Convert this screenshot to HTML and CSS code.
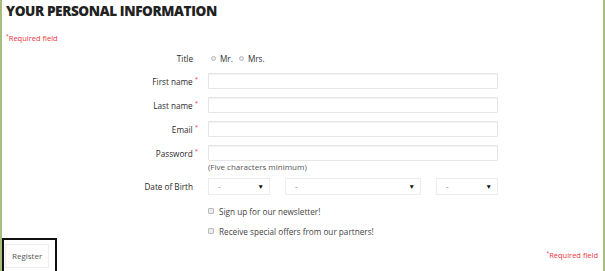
FILE: index.html
```html
<!DOCTYPE html>
<html lang="en">
<head>
<meta charset="UTF-8">
<title>Your personal information</title>
<link rel="stylesheet" href="styles.css">
</head>
<body>
<div class="frame">
  <h1>YOUR PERSONAL INFORMATION</h1>
  <p class="req"><sup>*</sup>Required field</p>

  <form class="account">
    <div class="row title-row">
      <label>Title</label>
      <div class="radios">
        <span class="radio"><i></i>Mr.</span>
        <span class="radio"><i></i>Mrs.</span>
      </div>
    </div>
    <div class="row">
      <label>First name<sup>*</sup></label>
      <input type="text">
    </div>
    <div class="row">
      <label>Last name<sup>*</sup></label>
      <input type="text">
    </div>
    <div class="row">
      <label>Email<sup>*</sup></label>
      <input type="text">
    </div>
    <div class="row">
      <label>Password<sup>*</sup></label>
      <input type="password">
    </div>
    <div class="row hint-row">
      <span></span>
      <span class="hint">(Five characters minimum)</span>
    </div>
    <div class="row dob-row">
      <label>Date of Birth</label>
      <div class="dob">
        <div class="sel day"><span>-</span><b>▼</b></div>
        <div class="sel month"><span>-</span><b>▼</b></div>
        <div class="sel year"><span>-</span><b>▼</b></div>
      </div>
    </div>
    <div class="row check-row">
      <span></span>
      <span class="check"><i></i>Sign up for our newsletter!</span>
    </div>
    <div class="row check-row">
      <span></span>
      <span class="check"><i></i>Receive special offers from our partners!</span>
    </div>
  </form>

  <div class="foot">
    <div class="btn-wrap"><button type="button">Register</button></div>
    <p class="req right"><sup>*</sup>Required field</p>
  </div>
</div>
</body>
</html>
```

FILE: styles.css
```css
*{box-sizing:border-box;margin:0;padding:0}
body{margin:0;font-family:"Open Sans","Noto Sans",sans-serif;color:#333;background:#fff}
.frame{width:605px;height:271px;border-left:2px solid #a7bd7e;border-right:2px solid #a7bd7e;overflow:hidden}
h1{font-size:13.6px;font-weight:800;color:#222;line-height:20px;padding:1px 0 0 4px;letter-spacing:-.4px}
.req{font-size:7.5px;color:#f13340;line-height:10px;margin:10px 0 0 4px}
.req sup{font-size:5px;vertical-align:3px}
/* form rows */
.account{margin-top:10px}
.row{display:grid;grid-template-columns:191px 290px;column-gap:15px;align-items:center;min-height:16px;margin-bottom:8px;font-size:8.2px}
.row label{text-align:right;color:#2b2b2b}
.row label sup{color:#f13340;font-size:6px;vertical-align:4px;margin-left:2px;margin-right:-5px}
.row input{height:16px;border:1px solid #e6e6e6;border-radius:1px;box-shadow:inset 0 1px 1px #f2f2f2;background:#fff;width:290px}
.title-row{margin-bottom:7px;margin-top:-3px}
.radios{display:flex;gap:6px;margin-left:3px}
.radio{display:flex;align-items:center;gap:4px}
.radio i{width:5px;height:5px;border-radius:50%;border:1px solid #bbb;background:#e9e9e9}
.hint-row{margin-top:-9px;margin-bottom:6px;min-height:12px}
.hint{color:#555;font-size:8px}
.dob-row{min-height:17px;margin-bottom:10px}
.dob{display:flex;justify-content:space-between}
.sel{height:17px;border:1px solid #ececec;display:flex;justify-content:space-between;align-items:center;padding:0 5px 0 9px;color:#999}
.sel b{color:#111;font-size:6.5px;font-weight:400}
.day{width:62px}
.month{width:136px}
.year{width:62px}
.check-row{min-height:12px;margin-bottom:8px}
.check{display:flex;align-items:center;gap:5px;color:#444}
.check i{width:6px;height:6px;border:1px solid #bbb;background:#ececec;border-radius:1px}
/* footer */
.foot{display:flex;justify-content:space-between;align-items:flex-start;margin-top:-7px}
.btn-wrap{border:2px solid #111;padding:2px 6px 4px 1px;height:36px}
.btn-wrap button{font-family:inherit;font-size:8px;color:#555;background:#fff;border:1px solid #eee;padding:0 6px;height:24px}
.req.right{margin:10px 5px 0 0}
```
